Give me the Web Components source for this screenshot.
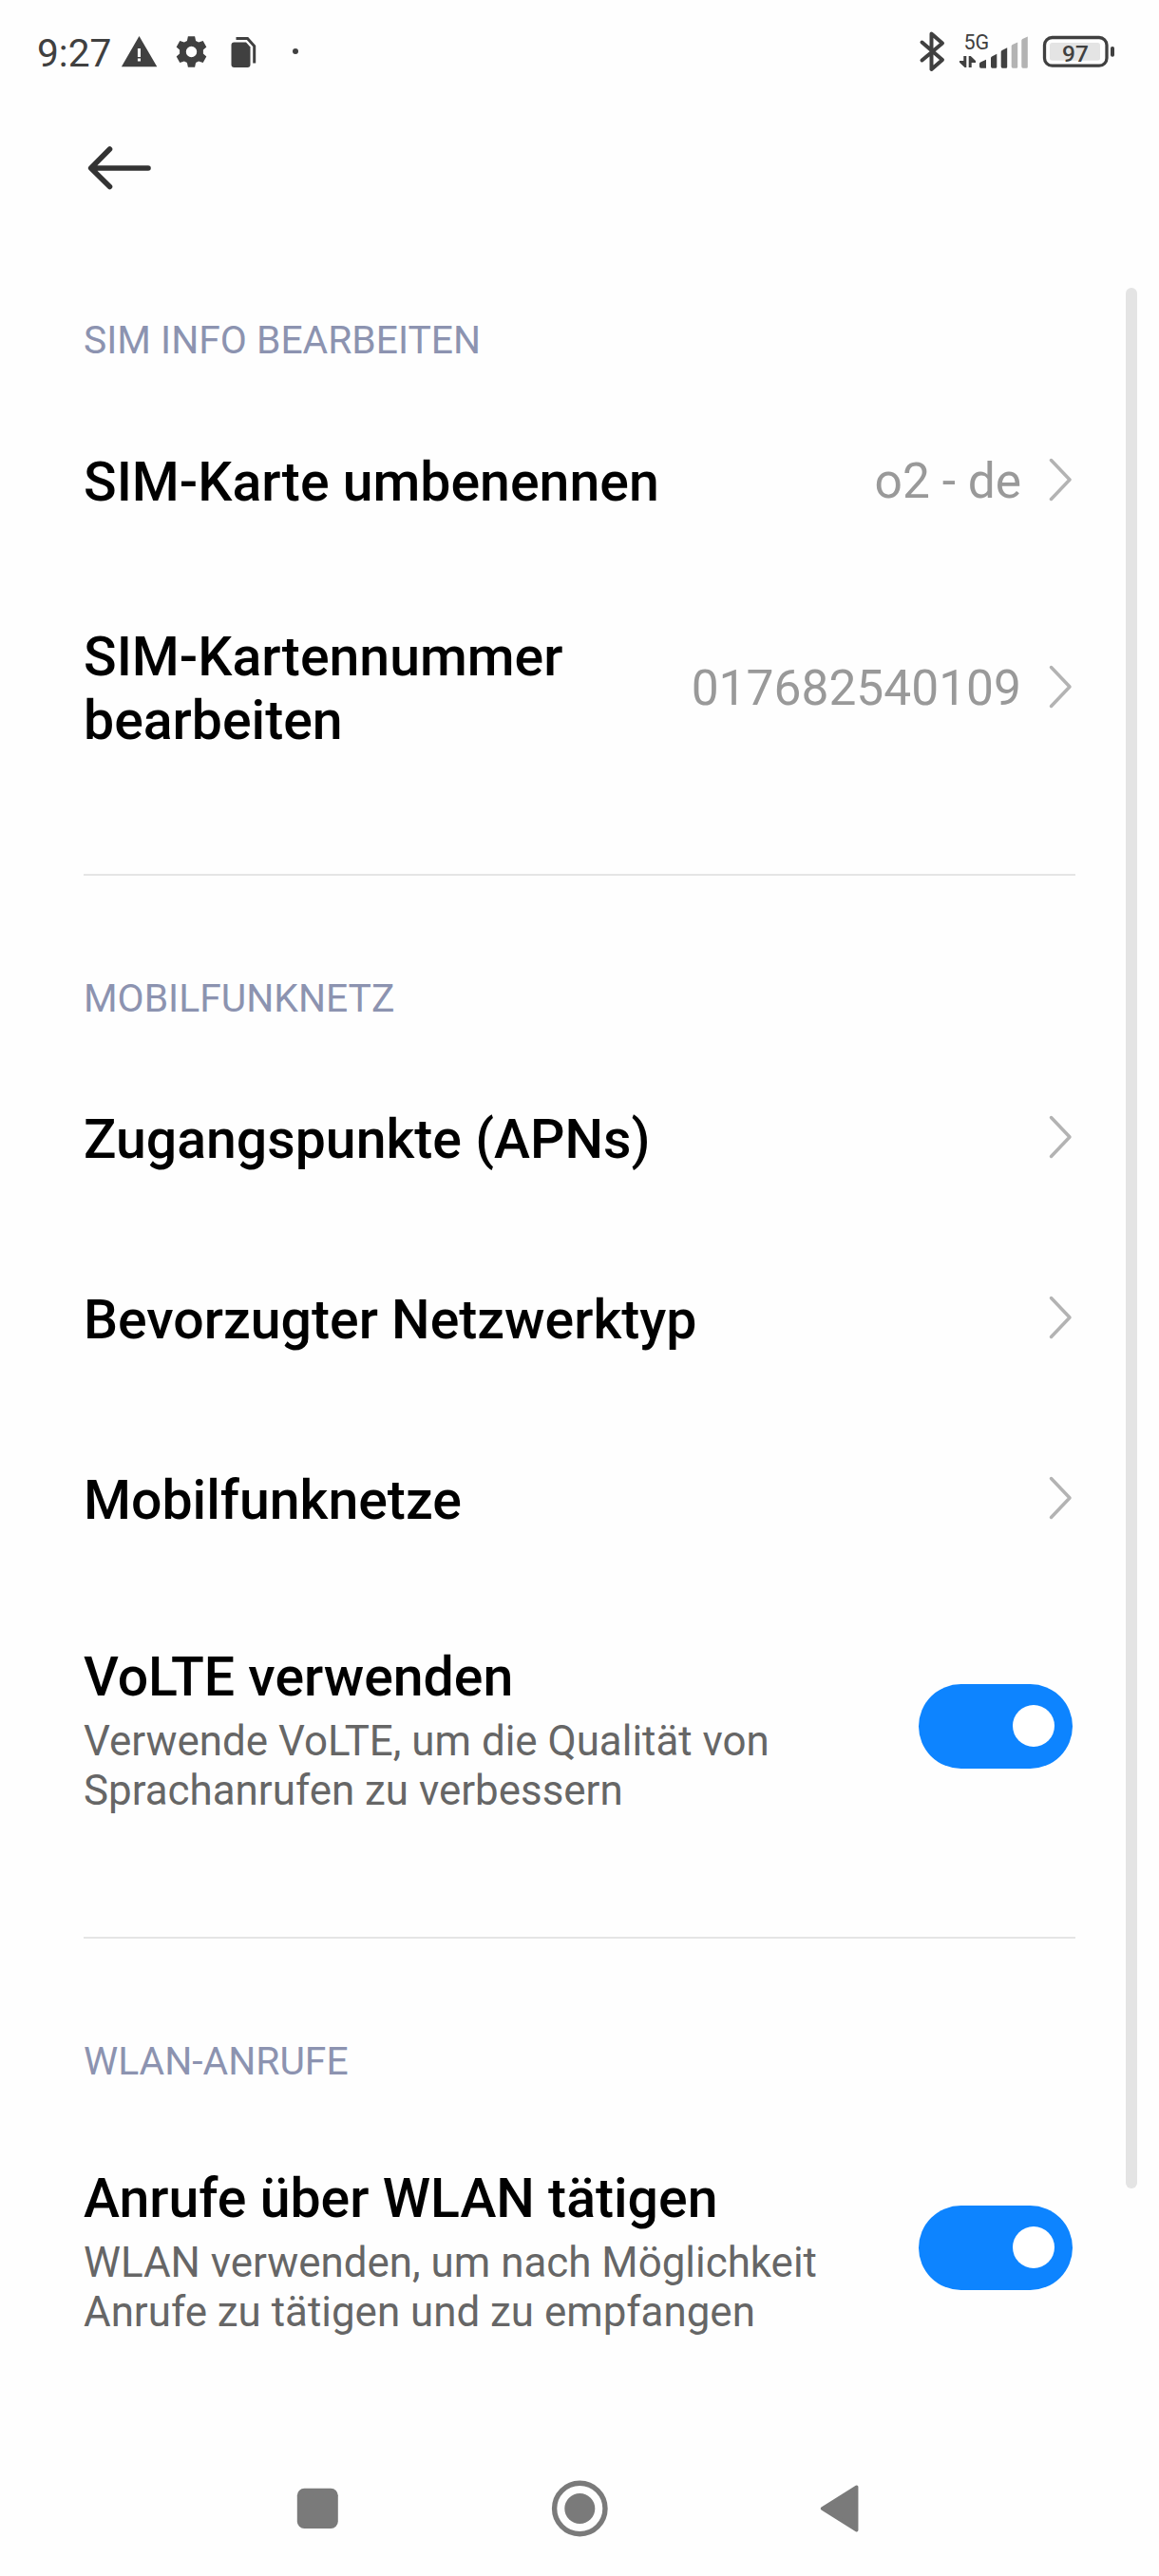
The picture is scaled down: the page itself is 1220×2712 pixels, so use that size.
<!DOCTYPE html>
<html lang="de">
<head>
<meta charset="utf-8">
<title>SIM-Einstellungen</title>
<style>
  body {
    margin: 0;
    background: #fefefe;
    font-family: Roboto, "Liberation Sans", sans-serif;
  }
</style>
</head>
<body>
<settings-screen>
  <status-bar slot="status" time="9:27" network="5G" battery="97"></status-bar>
  <title-bar slot="title"></title-bar>

  <settings-group label="SIM INFO BEARBEITEN">
    <settings-row value="o2 - de">SIM-Karte umbenennen</settings-row>
    <settings-row value="017682540109">SIM-Kartennummer bearbeiten</settings-row>
  </settings-group>
  <settings-group label="MOBILFUNKNETZ">
    <settings-row>Zugangspunkte (APNs)</settings-row>
    <settings-row>Bevorzugter Netzwerktyp</settings-row>
    <settings-row>Mobilfunknetze</settings-row>
    <settings-row type="switch">
      VoLTE verwenden
      <span slot="summary">Verwende VoLTE, um die Qualität von Sprachanrufen zu verbessern</span>
    </settings-row>
  </settings-group>
  <settings-group label="WLAN-ANRUFE">
    <settings-row type="switch">
      Anrufe über WLAN tätigen
      <span slot="summary">WLAN verwenden, um nach Möglichkeit Anrufe zu tätigen und zu empfangen</span>
    </settings-row>
  </settings-group>

  <nav-bar slot="nav"></nav-bar>
</settings-screen>

<script>
/**
 * Page frame: status bar, title bar, the scrolling list and the system navigation
 */
class SettingsScreen extends HTMLElement {
  constructor() {
    super();
    this.attachShadow({mode: 'open'}).innerHTML = `
      <style>
        :host {
          display: flex;
          flex-direction: column;
          position: relative;
          width: 1220px;
          height: 2712px;
          overflow: hidden;
        }
        main {
          flex: 1;
          min-height: 0;
          padding: 0 88px;
          overflow: hidden;
        }
        /* scroll thumb, floats over the list */
        .thumb {
          position: absolute;
          top: 303px;
          right: 23px;
          width: 12px;
          height: 2001px;
          border-radius: 6px;
          background: #e4e4e4;
        }
      </style>
      <slot name="status"></slot>
      <slot name="title"></slot>
      <main><slot></slot></main>
      <slot name="nav"></slot>
      <div class="thumb"></div>
    `;
  }
}
customElements.define('settings-screen', SettingsScreen);

class StatusBar extends HTMLElement {
  constructor() {
    super();
    this.attachShadow({mode: 'open'});
  }

  connectedCallback() {
    this.shadowRoot.innerHTML = `
      <style>
        :host {
          display: flex;
          justify-content: space-between;
          height: 110px;
          padding: 0 40px 0 39px;
          color: #404040;
        }
        .side {
          display: flex;
          align-items: flex-start;
        }
        .time {
          font-size: 40.700px;
          line-height: 47px;
          padding-top: 33px;
          width: 85px;
        }
        svg {
          display: block;
          height: 110px;
          fill: currentColor;
        }
        text { font-family: Roboto, "Liberation Sans", sans-serif; }
      </style>
      <div class="side">
        <div class="time">${this.getAttribute('time')}</div>
        <svg width="200" viewBox="124 0 200 110">
          <path fill-rule="evenodd" d="M146.500 38L165.300 70.300H127.900ZM144.900 51V60H148V51ZM144.900 61.500V64.500H148V61.500Z"/>
          <!-- gear -->
          <g transform="translate(201.500 54.500)">
            <path fill-rule="evenodd" d="M-3.600 -16.200H3.600L4.600 -11.600L7.600 -9.900L12.200 -11.400L15.800 -5.100L12.400 -1.900V1.900L15.800 5.100L12.200 11.400L7.600 9.900L4.600 11.600L3.600 16.200H-3.600L-4.600 11.600L-7.600 9.900L-12.200 11.400L-15.800 5.100L-12.400 1.900V-1.900L-15.800 -5.100L-12.200 -11.400L-7.600 -9.900L-4.600 -11.600ZM0 -5.700A5.700 5.700 0 1 0 0 5.700A5.700 5.700 0 1 0 0 -5.700Z"/>
          </g>
          <!-- stacked cards -->
          <path d="M246.500 44.500H259L263.500 49.500V68Q263.500 71 260.500 71H246.500Q243.500 71 243.500 68V47.500Q243.500 44.500 246.500 44.500Z"/>
          <path d="M248.500 40.500H260.500L267.700 48.500V66.500" fill="none" stroke="currentColor" stroke-width="3"/>
          <circle cx="311" cy="54" r="3"/>
        </svg>
      </div>
      <div class="side">
        <svg width="220" viewBox="960 0 220 110">
          <path d="M970.500 44.500L992 63L980.500 73V35.500L992 45.500L970.500 63.500" fill="none" stroke="currentColor" stroke-width="4" stroke-linecap="round" stroke-linejoin="round"/>
          <text x="1014.500" y="52" font-size="21.500">${this.getAttribute('network')}</text>
          <!-- up/down data arrows -->
          <path d="M1014.300 59H1017.300V71H1015.500L1010 65.700V64H1014.300ZM1019.700 71V59H1021.800L1027 64V66H1022.700V71Z"/>
          <path d="M1031 70V67Q1031 66 1032 65.500L1038 62.800V71.700H1032.500Q1031 71.700 1031 70ZM1043 70V61Q1043 60 1044 59.500L1049.300 56.800V70.500Q1049.300 71.700 1048 71.700H1044.500Q1043 71.700 1043 70ZM1053.700 70V54.500Q1053.700 53.500 1054.700 53L1060.200 50.200V70.500Q1060.200 71.700 1059 71.700H1055.200Q1053.700 71.700 1053.700 70Z"/>
          <path fill="#b3b3b3" d="M1064.700 70V48.500Q1064.700 47.500 1065.700 47L1071.200 44.500V70.500Q1071.200 71.700 1070 71.700H1066.200Q1064.700 71.700 1064.700 70ZM1075.300 70V42.500Q1075.300 41.500 1076.300 41L1081.800 38.500V70.500Q1081.800 71.700 1080.500 71.700H1076.800Q1075.300 71.700 1075.300 70Z"/>
          <rect x="1099.500" y="39.500" width="65.500" height="29.700" rx="8" fill="none" stroke="currentColor" stroke-width="3.300"/>
          <rect x="1105" y="45" width="53" height="18.800" rx="2.500" fill="#e4e4e4"/>
          <rect x="1169" y="49" width="4" height="10.700" rx="1.800"/>
          <text x="1118" y="64.500" font-size="24.500" font-weight="500">${this.getAttribute('battery')}</text>
        </svg>
      </div>
    `;
  }
}
customElements.define('status-bar', StatusBar);

class TitleBar extends HTMLElement {
  constructor() {
    super();
    this.attachShadow({mode: 'open'}).innerHTML = `
      <style>
        :host {
          display: flex;
          align-items: center;
          box-sizing: border-box;
          height: 119.500px;
          padding: 13.500px 88px 0;
        }
        svg {
          fill: none;
          stroke: #333;
          stroke-width: 5.600;
          stroke-linecap: round;
          stroke-linejoin: round;
        }
      </style>
      <svg width="76" height="60" viewBox="88 146.500 76 60">
        <path d="M115.500 156.500L95.700 176.500L115.500 196M97 176.500H156"/>
      </svg>
    `;
  }
}
customElements.define('title-bar', TitleBar);

/**
 * A captioned block of rows. Every group but the last is closed by a divider.
 */
class SettingsGroup extends HTMLElement {
  constructor() {
    super();
    this.attachShadow({mode: 'open'});
  }

  connectedCallback() {
    this.shadowRoot.innerHTML = `
      <style>
        :host {
          display: block;
          padding: 90.500px 0 72px;
          border-bottom: 2px solid #e5e5e5;
        }
        :host(:last-of-type) { border-bottom: 0; }
        h2 {
          margin: 0 0 15px;
          color: #8c93b0;
          font-size: 40.800px;
          font-weight: 400;
          line-height: 77px;
        }
      </style>
      <h2>${this.getAttribute('label')}</h2>
      <slot></slot>
    `;
  }
}
customElements.define('settings-group', SettingsGroup);

class SettingsRow extends HTMLElement {
  constructor() {
    super();
    this.attachShadow({mode: 'open'});
  }

  get control() {
    if (this.getAttribute('type') === 'switch') {
      return `<toggle-switch></toggle-switch>`;
    }
    return `
      <div class="value">${this.getAttribute('value') || ''}</div>
      <svg width="27" height="48" viewBox="0 0 27 48">
        <path d="M3.500 3.500L23 24L3.500 44.500"/>
      </svg>`;
  }

  connectedCallback() {
    this.shadowRoot.innerHTML = `
      <style>
        :host {
          display: flex;
          align-items: center;
          box-sizing: border-box;
          min-height: 190px;
          padding: 56px 0;
        }
        :host([type=switch]) { padding: 57px 0 56.500px; }
        .text { flex: 1; }
        .title {
          color: #000;
          font-size: 57.200px;
          font-weight: 500;
          line-height: 67px;
        }
        .summary {
          max-width: 800px;
          padding-top: 8px;
          color: #666;
          font-size: 43.900px;
          line-height: 52px;
        }
        .value {
          margin-left: 40px;
          color: #999;
          font-size: 51.500px;
          line-height: 60px;
          white-space: nowrap;
        }
        svg {
          margin: 0 2px 5px 28px;
          fill: none;
          stroke: #b3b3b3;
          stroke-width: 3.500;
          stroke-linecap: round;
          stroke-linejoin: round;
        }
        toggle-switch { margin: 0 3px 8px 60px; }
      </style>
      <div class="text">
        <div class="title"><slot></slot></div>
        ${this.querySelector('[slot=summary]') ? '<div class="summary"><slot name="summary"></slot></div>' : ''}
      </div>
      ${this.control}
    `;
  }
}
customElements.define('settings-row', SettingsRow);

class ToggleSwitch extends HTMLElement {
  constructor() {
    super();
    this.attachShadow({mode: 'open'}).innerHTML = `
      <style>
        :host {
          display: flex;
          align-items: center;
          justify-content: flex-end;
          box-sizing: border-box;
          width: 162px;
          height: 89px;
          padding-right: 19px;
          border-radius: 45px;
          background: #0d84ff;
        }
        .knob {
          width: 44px;
          height: 44px;
          border-radius: 50%;
          background: #fff;
        }
      </style>
      <div class="knob"></div>
    `;
  }
}
customElements.define('toggle-switch', ToggleSwitch);

class NavBar extends HTMLElement {
  constructor() {
    super();
    this.attachShadow({mode: 'open'}).innerHTML = `
      <style>
        :host {
          display: flex;
          justify-content: center;
          align-items: center;
          height: 142px;
        }
        svg { fill: #7a7a7a; }
      </style>
      <svg width="1220" height="142" viewBox="0 2570 1220 142">
        <rect x="312.800" y="2619.700" width="43" height="42.300" rx="7.500"/>
        <circle cx="610.300" cy="2641" r="26.700" fill="none" stroke="#7a7a7a" stroke-width="5.400"/>
        <circle cx="610.300" cy="2641" r="16"/>
        <path d="M865.500 2641L901.700 2618.300V2663.700Z" stroke="#7a7a7a" stroke-width="3.500" stroke-linejoin="round"/>
      </svg>
    `;
  }
}
customElements.define('nav-bar', NavBar);
</script>
</body>
</html>
